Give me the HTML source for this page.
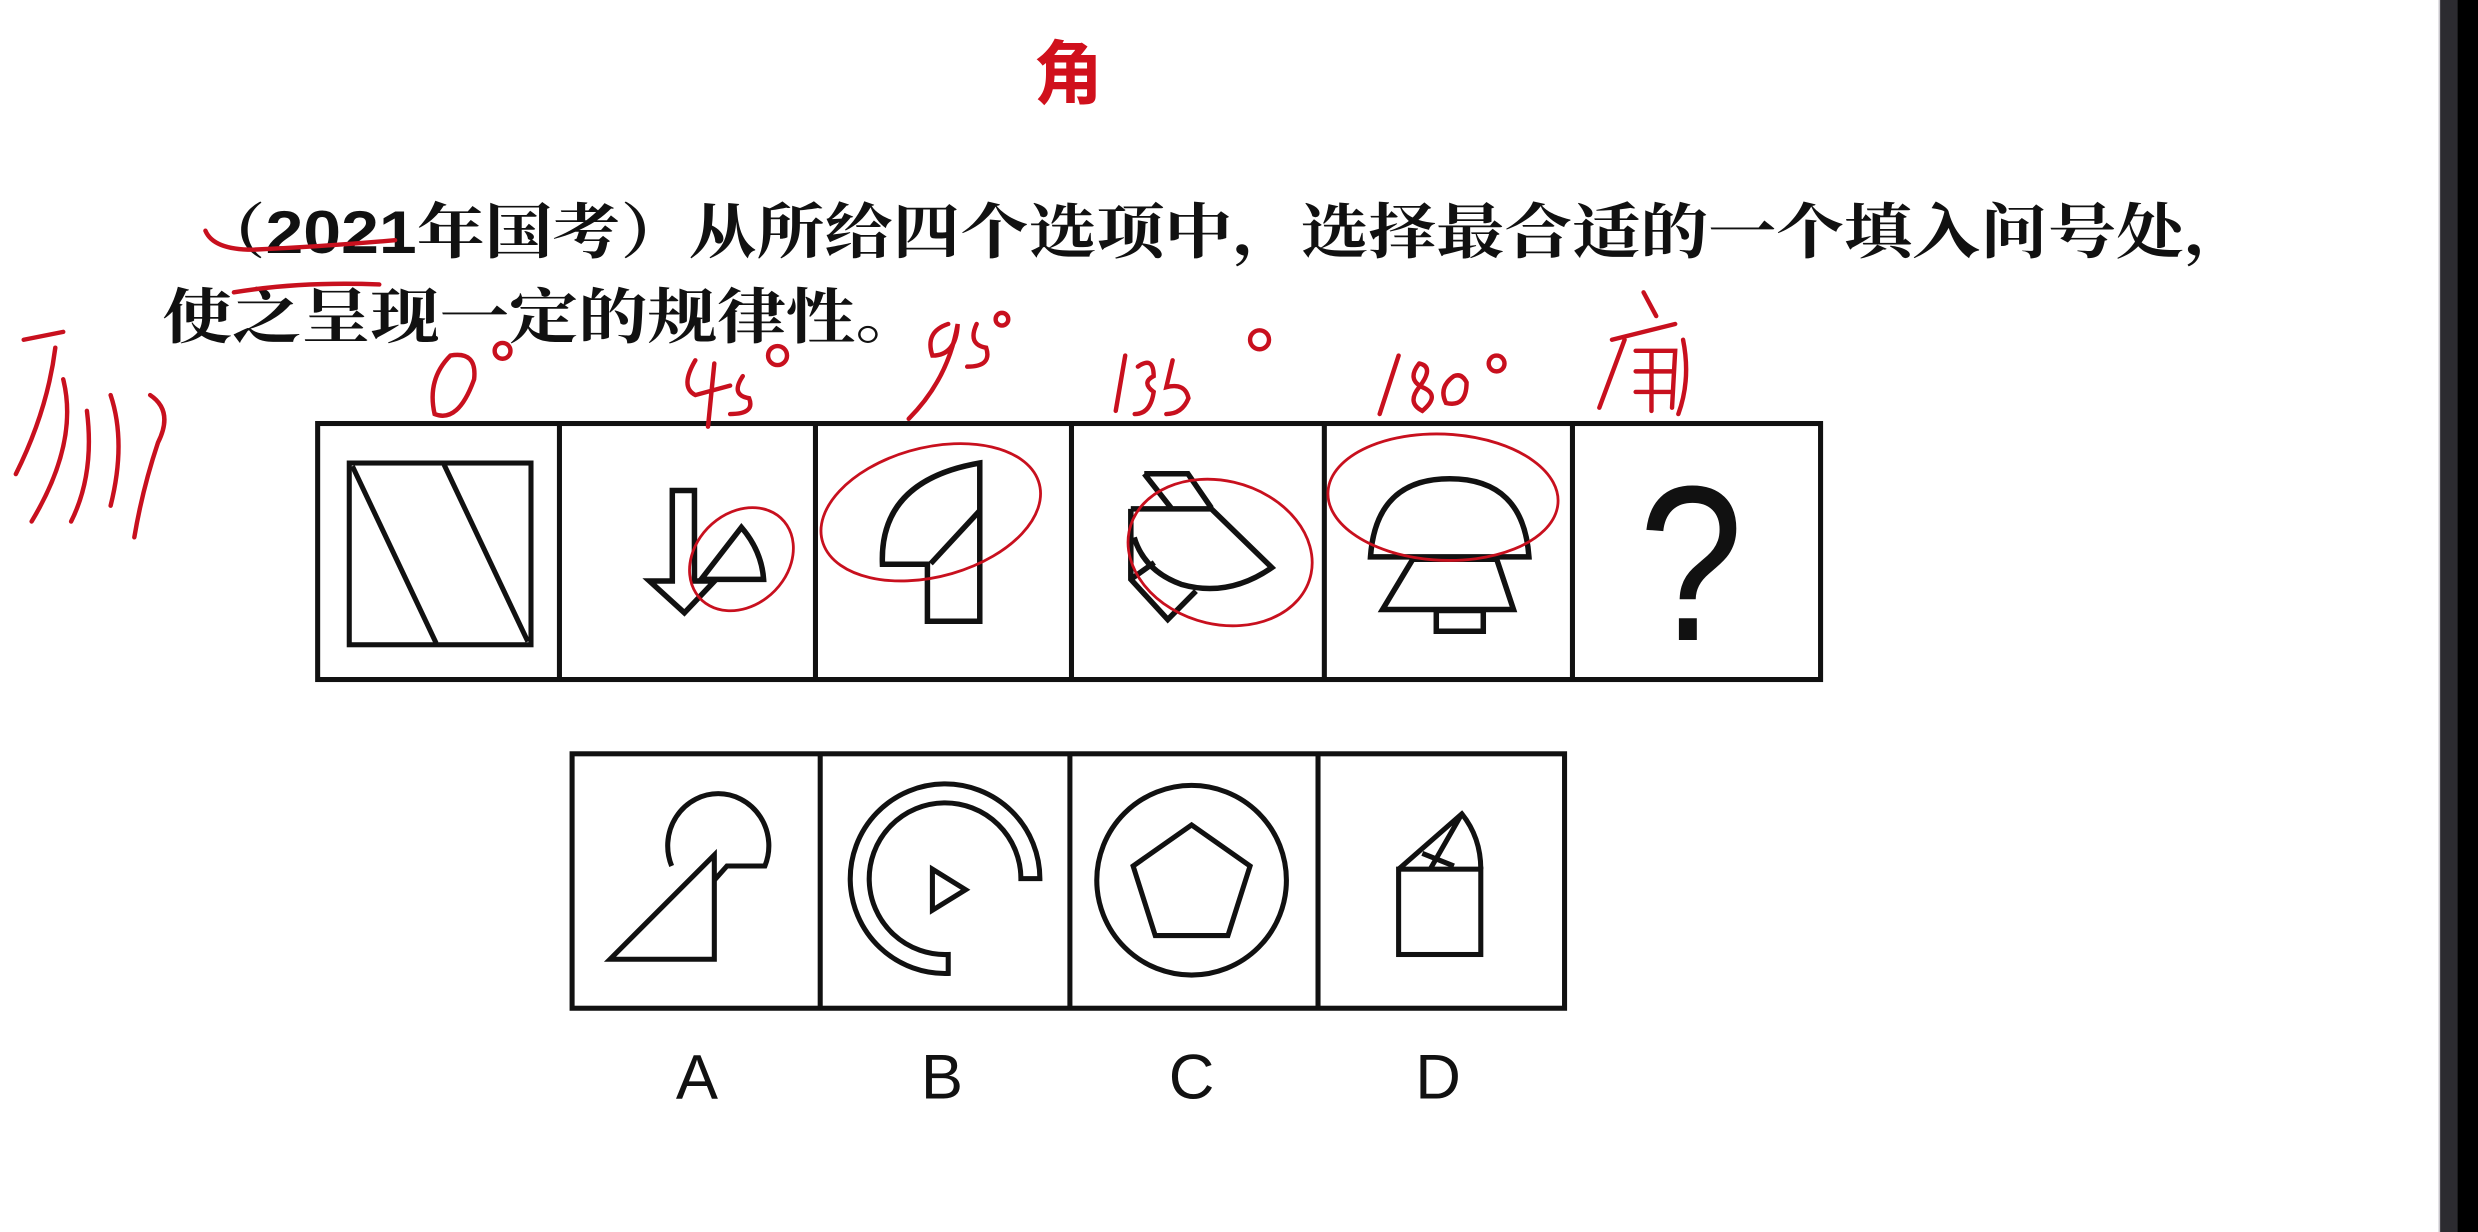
<!DOCTYPE html>
<html><head><meta charset="utf-8"><style>
html,body{margin:0;padding:0;background:#fff;}
svg{display:block;}
</style></head><body>
<svg width="2478" height="1232" viewBox="0 0 1568 779.6" preserveAspectRatio="none" xmlns="http://www.w3.org/2000/svg">
<rect x="0" y="0" width="1568" height="780" fill="#fff"/>
<rect x="1544" y="0" width="11" height="780" fill="#2c2b30"/>
<rect x="1555" y="0" width="13" height="780" fill="#000"/>
<rect x="1543" y="0" width="1" height="780" fill="#c8c6cc"/>

<text x="676" y="62" font-family="Liberation Sans, Noto Sans CJK SC, sans-serif" font-size="44" font-weight="bold" fill="#d0101c" text-anchor="middle">角</text>

<g font-family="Liberation Sans, Noto Serif CJK SC, serif" font-weight="bold" fill="#111" font-size="38">
<text x="125" y="160" textLength="1300" lengthAdjust="spacingAndGlyphs">（2021年国考）从所给四个选项中，选择最合适的一个填入问号处，</text>
<text x="103" y="214" textLength="482" lengthAdjust="spacingAndGlyphs">使之呈现一定的规律性。</text>
</g>

<g fill="none" stroke="#111" stroke-width="3.2">
<rect x="201" y="268" width="951" height="162"/>
<line x1="354" y1="268" x2="354" y2="430"/>
<line x1="516" y1="268" x2="516" y2="430"/>
<line x1="678" y1="268" x2="678" y2="430"/>
<line x1="838" y1="268" x2="838" y2="430"/>
<line x1="995" y1="268" x2="995" y2="430"/>
<rect x="221" y="293" width="115" height="115"/>
<line x1="223" y1="295" x2="276" y2="407"/>
<line x1="281" y1="294" x2="334" y2="406"/>
</g>
<g transform="matrix(0.4248 0 0 0.2121 348.1 272.2)" fill="none" stroke="#111" stroke-width="5.5" stroke-linejoin="miter">
<path vector-effect="non-scaling-stroke" d="M182,180 L215,180 L215,450 L245,450 L200,545 L148,450 L182,450 Z"/>
<path vector-effect="non-scaling-stroke" d="M225,445 L318,445 Q315,360 285,290 Z"/>
<path vector-effect="non-scaling-stroke" d="M640,98 L640,570 L562,570 L562,400 L495,400 Q490,150 640,98 Z"/>
<path vector-effect="non-scaling-stroke" d="M640,240 L567,398"/>
<path vector-effect="non-scaling-stroke" d="M885,130 L950,130 L985,232 M885,130 L925,232"/>
<path vector-effect="non-scaling-stroke" d="M865,235 L985,235 L1075,410 Q1010,500 940,460 Q885,420 870,320"/>
<path vector-effect="non-scaling-stroke" d="M865,235 L865,445 L920,565 L962,480 M865,445 L900,395"/>
<path vector-effect="non-scaling-stroke" d="M1222,378 Q1230,145 1340,145 Q1450,145 1458,378 Z"/>
<path vector-effect="non-scaling-stroke" d="M1285,385 L1410,385 L1435,535 L1240,535 Z"/>
<path vector-effect="non-scaling-stroke" d="M1320,538 L1390,538 L1390,600 L1320,600 Z"/>
</g>
<text x="1070" y="405" font-family="Liberation Sans, sans-serif" font-size="140" fill="#111" text-anchor="middle" transform="translate(1070 0) scale(0.85 1) translate(-1070 0)">?</text>

<g fill="none" stroke="#111" stroke-width="3.2">
<rect x="362" y="477" width="628" height="161"/>
<line x1="519" y1="477" x2="519" y2="638"/>
<line x1="677" y1="477" x2="677" y2="638"/>
<line x1="834" y1="477" x2="834" y2="638"/>
<path d="M425,548 A32,33 0 1 1 484,548 L460,548 L452,557"/>
<path d="M386,607 L452,541 L452,607 Z"/>
<path d="M658,556 A60,60 0 1 0 600,616 L600,604 A48,48 0 1 1 646,556 Z"/>
<path d="M590,550 L611,563 L590,576 Z"/>
<circle cx="754" cy="557" r="60"/>
<path d="M754,522 L791,548 L777,592 L731,592 L717,548 Z"/>
<rect x="885" y="550" width="52" height="54"/>
<path d="M885,550 L925,515 Q937,530 937,550 M905,550 L925,515 M900,540 L920,548"/>
</g>
<g font-family="Liberation Sans, sans-serif" font-size="40" fill="#111" text-anchor="middle">
<text x="441" y="695">A</text>
<text x="596" y="695">B</text>
<text x="754" y="695">C</text>
<text x="910" y="695">D</text>
</g>

<g fill="none" stroke="#c8101e" stroke-width="2.8" stroke-linecap="round">
<path d="M130,146 Q135,158 160,158 Q205,156 250,152"/>
<path d="M148,185 Q190,178 240,180"/>
<g transform="matrix(0.4248 0 0 0.2121 348.1 272.2)">
<ellipse vector-effect="non-scaling-stroke" cx="285" cy="385" rx="75" ry="155" transform="rotate(8 285 385)"/>
<ellipse vector-effect="non-scaling-stroke" cx="567" cy="245" rx="150" ry="215" transform="rotate(25 567 245)"/>
<ellipse vector-effect="non-scaling-stroke" cx="998" cy="365" rx="135" ry="220" transform="rotate(-8 998 365)"/>
<ellipse vector-effect="non-scaling-stroke" cx="1330" cy="200" rx="170" ry="190" transform="rotate(-15 1330 200)"/>
</g>
<path d="M15,215 L40,210 M35,220 Q30,260 10,300 M40,240 Q50,280 20,330 M55,260 Q60,300 45,330 M70,250 Q80,280 70,320 M95,250 Q110,260 100,280 Q90,310 85,340"/>
<path d="M285,225 Q270,240 275,262 Q290,268 300,240 Q302,222 285,225"/>
<circle cx="318" cy="222" r="5"/>
<path d="M440,228 Q430,245 440,250 L462,244 M452,230 L448,270 M470,238 Q462,250 474,252 Q478,262 462,262"/>
<circle cx="492" cy="225" r="6"/>
<path d="M600,205 Q585,210 590,225 Q605,225 606,205 Q600,240 575,265 M618,205 Q612,218 624,220 Q628,232 612,232"/>
<circle cx="634" cy="202" r="4"/>
<path d="M712,225 L706,260 M720,232 Q730,225 730,238 Q722,242 730,248 Q728,262 718,262 M742,228 L738,245 Q750,242 752,252 Q748,262 738,262"/>
<circle cx="797" cy="215" r="6"/>
<path d="M885,225 L873,262 M898,230 Q890,240 900,245 Q912,250 900,260 Q890,255 898,245 Q908,232 898,230 M920,238 Q910,245 915,255 Q928,258 928,242 Q925,236 920,238"/>
<circle cx="947" cy="230" r="5"/>
<path d="M1040,185 L1048,200 M1020,215 L1060,205 M1028,215 L1012,258 M1035,222 L1060,222 L1058,258 M1035,235 L1058,235 M1035,248 L1058,248 M1045,222 L1045,260 M1065,215 Q1070,240 1062,262"/>
</g>
</svg>
</body></html>
